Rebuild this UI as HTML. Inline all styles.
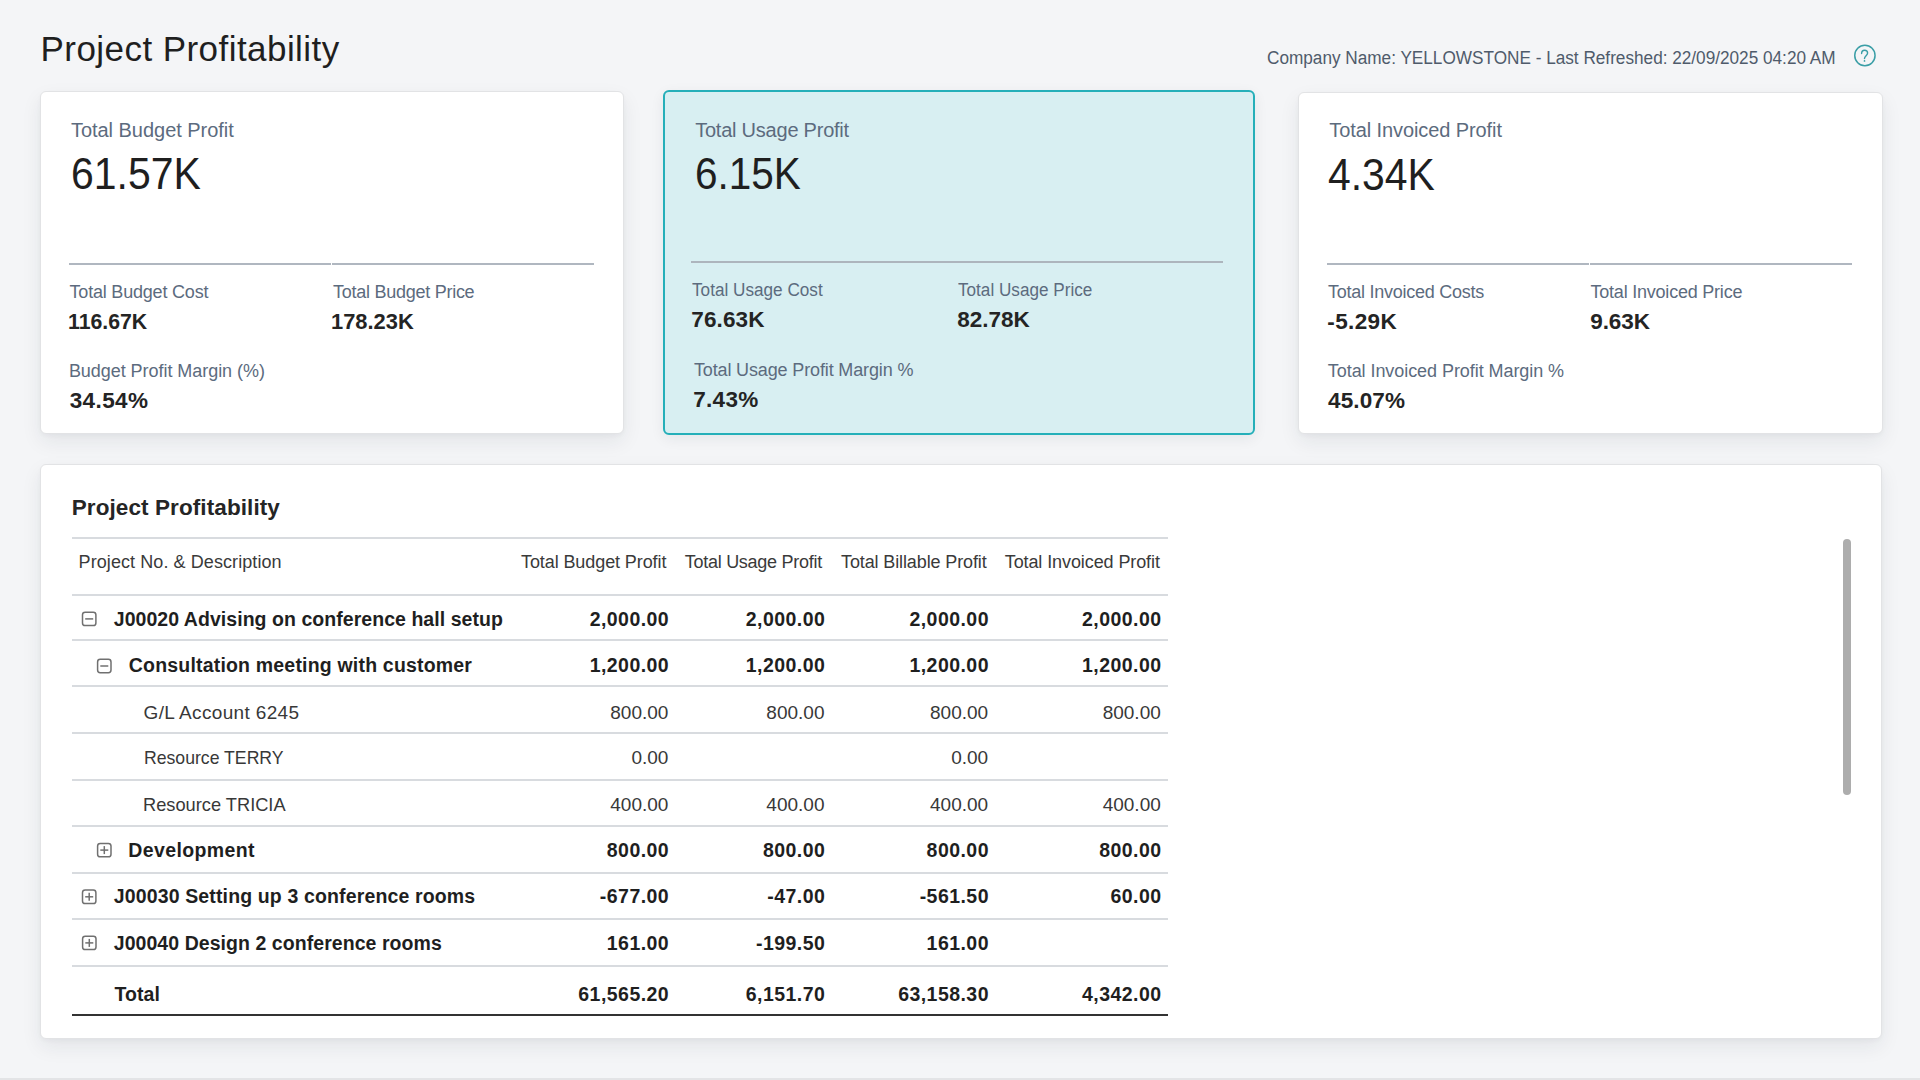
<!DOCTYPE html>
<html><head><meta charset="utf-8">
<style>
html,body{margin:0;padding:0;}
body{width:1920px;height:1080px;overflow:hidden;background:#f4f5f7;position:relative;font-family:"Liberation Sans",sans-serif;}
.t{position:absolute;white-space:nowrap;}
.card{position:absolute;box-sizing:border-box;background:#fff;border:1px solid #e2e3e5;border-radius:6px;box-shadow:0 8px 20px rgba(30,40,60,0.075),0 2px 4px rgba(30,40,60,0.03);}
.hl{position:absolute;height:2px;}
.icon{position:absolute;box-sizing:border-box;width:14.5px;height:14.5px;border:1.5px solid #7b7b7b;border-radius:3px;}
.icon:before{content:"";position:absolute;left:1.75px;right:1.75px;top:5.25px;height:1.5px;background:#7b7b7b;}
.icon.plus:after{content:"";position:absolute;top:1.75px;bottom:1.75px;left:5.25px;width:1.5px;background:#7b7b7b;}
</style></head><body>
<div class="card" style="left:40px;top:91px;width:584px;height:343px;"></div>
<div class="card" style="left:663px;top:90px;width:592px;height:345px;background:#d8eff2;border:2px solid #25afb9;box-shadow:0 4px 14px rgba(30,40,60,0.07);"></div>
<div class="card" style="left:1298px;top:92px;width:585px;height:342px;"></div>
<div class="card" style="left:40px;top:464px;width:1842px;height:575px;"></div>
<!-- card dividers -->
<div class="hl" style="left:69px;top:263px;width:262px;background:#b0b7c0"></div>
<div class="hl" style="left:332px;top:263px;width:262px;background:#b0b7c0"></div>
<div class="hl" style="left:691px;top:261px;width:532px;background:#adb5bd"></div>
<div class="hl" style="left:1327px;top:263px;width:262px;background:#b0b7c0"></div>
<div class="hl" style="left:1590px;top:263px;width:262px;background:#b0b7c0"></div>
<!-- table lines -->
<div class="hl" style="left:72px;top:537px;width:1096px;background:#d8dbdf"></div>
<div class="hl" style="left:72px;top:594px;width:1096px;background:#d8dbdf"></div>
<div class="hl" style="left:72px;top:639px;width:1096px;background:#d8dbdf"></div>
<div class="hl" style="left:72px;top:685px;width:1096px;background:#d8dbdf"></div>
<div class="hl" style="left:72px;top:732px;width:1096px;background:#d8dbdf"></div>
<div class="hl" style="left:72px;top:779px;width:1096px;background:#d8dbdf"></div>
<div class="hl" style="left:72px;top:825px;width:1096px;background:#d8dbdf"></div>
<div class="hl" style="left:72px;top:872px;width:1096px;background:#d8dbdf"></div>
<div class="hl" style="left:72px;top:918px;width:1096px;background:#d8dbdf"></div>
<div class="hl" style="left:72px;top:965px;width:1096px;background:#d8dbdf"></div>
<div class="hl" style="left:72px;top:1014px;width:1096px;background:#333"></div>
<!-- expand icons -->
<svg style="position:absolute;left:81px;top:611px" width="18" height="18"><rect x="1.50" y="1.20" width="13.4" height="13.4" rx="2.6" fill="none" stroke="#707070" stroke-width="1.5"/><path d="M4.20 7.90H12.20" stroke="#707070" stroke-width="1.5"/></svg>
<svg style="position:absolute;left:96px;top:658px" width="18" height="18"><rect x="1.60" y="1.30" width="13.4" height="13.4" rx="2.6" fill="none" stroke="#707070" stroke-width="1.5"/><path d="M4.30 8.00H12.30" stroke="#707070" stroke-width="1.5"/></svg>
<svg style="position:absolute;left:96px;top:842px" width="18" height="18"><rect x="1.60" y="1.40" width="13.4" height="13.4" rx="2.6" fill="none" stroke="#707070" stroke-width="1.5"/><path d="M4.30 8.10H12.30" stroke="#707070" stroke-width="1.5"/><path d="M8.30 4.10V12.10" stroke="#707070" stroke-width="1.5"/></svg>
<svg style="position:absolute;left:81px;top:889px" width="18" height="18"><rect x="1.50" y="1.10" width="13.4" height="13.4" rx="2.6" fill="none" stroke="#707070" stroke-width="1.5"/><path d="M4.20 7.80H12.20" stroke="#707070" stroke-width="1.5"/><path d="M8.20 3.80V11.80" stroke="#707070" stroke-width="1.5"/></svg>
<svg style="position:absolute;left:81px;top:935px" width="18" height="18"><rect x="1.60" y="1.20" width="13.4" height="13.4" rx="2.6" fill="none" stroke="#707070" stroke-width="1.5"/><path d="M4.30 7.90H12.30" stroke="#707070" stroke-width="1.5"/><path d="M8.30 3.90V11.90" stroke="#707070" stroke-width="1.5"/></svg>
<!-- scrollbar -->
<div style="position:absolute;left:1843px;top:539px;width:8px;height:256px;border-radius:4px;background:#adadad"></div>
<!-- help icon -->
<svg style="position:absolute;left:1853px;top:44px" width="24" height="24" viewBox="0 0 24 24">
<circle cx="11.9" cy="11.5" r="10.15" fill="none" stroke="#3a9ea6" stroke-width="1.5"/>
<path d="M8.6 9.5 C8.6 7.5 9.9 6.2 11.6 6.2 C13.3 6.2 14.6 7.4 14.6 9.1 C14.6 11.3 11.5 12.2 11.5 14.5" fill="none" stroke="#3a9ea6" stroke-width="1.4" stroke-linecap="round"/>
<circle cx="11.5" cy="16.9" r="0.85" fill="#3a9ea6"/>
</svg>
<div style="position:absolute;left:0;top:1078px;width:1920px;height:2px;background:#e3e4e6"></div>
<div class="t" style="left:40.57px;top:27.12px;font-size:35px;line-height:44px;font-weight:400;color:#1f1f1f;letter-spacing:0.440px;">Project Profitability</div>
<div class="t" style="left:1266.69px;top:46.51px;font-size:18px;line-height:22px;font-weight:400;color:#4f5b6b;letter-spacing:0.000px;transform:scaleX(0.9546);transform-origin:0 0;">Company Name: YELLOWSTONE - Last Refreshed: 22/09/2025 04:20 AM</div>
<div class="t" style="left:70.94px;top:117.77px;font-size:20px;line-height:25px;font-weight:400;color:#5c6b7e;letter-spacing:-0.030px;">Total Budget Profit</div>
<div class="t" style="left:70.73px;top:145.71px;font-size:45px;line-height:56px;font-weight:400;color:#1f1f1f;letter-spacing:0.000px;transform:scaleX(0.9102);transform-origin:0 0;">61.57K</div>
<div class="t" style="left:69.52px;top:281.26px;font-size:18px;line-height:22px;font-weight:400;color:#5c6b7e;letter-spacing:-0.198px;">Total Budget Cost</div>
<div class="t" style="left:68.47px;top:307.90px;font-size:22.5px;line-height:28px;font-weight:700;color:#242424;letter-spacing:0.000px;transform:scaleX(0.9448);transform-origin:0 0;">116.67K</div>
<div class="t" style="left:333.02px;top:281.26px;font-size:18px;line-height:22px;font-weight:400;color:#5c6b7e;letter-spacing:-0.263px;">Total Budget Price</div>
<div class="t" style="left:331.13px;top:307.90px;font-size:22.5px;line-height:28px;font-weight:700;color:#242424;letter-spacing:0.000px;transform:scaleX(0.9721);transform-origin:0 0;">178.23K</div>
<div class="t" style="left:68.89px;top:360.26px;font-size:18px;line-height:22px;font-weight:400;color:#5c6b7e;letter-spacing:-0.045px;">Budget Profit Margin (%)</div>
<div class="t" style="left:69.65px;top:387.20px;font-size:22.5px;line-height:28px;font-weight:700;color:#242424;letter-spacing:0.412px;">34.54%</div>
<div class="t" style="left:695.19px;top:117.57px;font-size:20px;line-height:25px;font-weight:400;color:#5c6b7e;letter-spacing:-0.230px;">Total Usage Profit</div>
<div class="t" style="left:695.00px;top:145.51px;font-size:45px;line-height:56px;font-weight:400;color:#1f1f1f;letter-spacing:0.000px;transform:scaleX(0.9000);transform-origin:0 0;">6.15K</div>
<div class="t" style="left:692.23px;top:279.36px;font-size:18px;line-height:22px;font-weight:400;color:#5c6b7e;letter-spacing:0.000px;transform:scaleX(0.9536);transform-origin:0 0;">Total Usage Cost</div>
<div class="t" style="left:691.30px;top:305.50px;font-size:22.5px;line-height:28px;font-weight:700;color:#242424;letter-spacing:0.125px;">76.63K</div>
<div class="t" style="left:957.63px;top:279.36px;font-size:18px;line-height:22px;font-weight:400;color:#5c6b7e;letter-spacing:0.000px;transform:scaleX(0.9521);transform-origin:0 0;">Total Usage Price</div>
<div class="t" style="left:957.30px;top:305.50px;font-size:22.5px;line-height:28px;font-weight:700;color:#242424;letter-spacing:-0.035px;">82.78K</div>
<div class="t" style="left:693.92px;top:359.16px;font-size:18px;line-height:22px;font-weight:400;color:#5c6b7e;letter-spacing:-0.138px;">Total Usage Profit Margin %</div>
<div class="t" style="left:693.30px;top:385.70px;font-size:22.5px;line-height:28px;font-weight:700;color:#242424;letter-spacing:0.281px;">7.43%</div>
<div class="t" style="left:1329.29px;top:118.47px;font-size:20px;line-height:25px;font-weight:400;color:#5c6b7e;letter-spacing:-0.094px;">Total Invoiced Profit</div>
<div class="t" style="left:1328.36px;top:146.71px;font-size:45px;line-height:56px;font-weight:400;color:#1f1f1f;letter-spacing:0.000px;transform:scaleX(0.9088);transform-origin:0 0;">4.34K</div>
<div class="t" style="left:1328.02px;top:280.86px;font-size:18px;line-height:22px;font-weight:400;color:#5c6b7e;letter-spacing:-0.252px;">Total Invoiced Costs</div>
<div class="t" style="left:1327.30px;top:307.90px;font-size:22.5px;line-height:28px;font-weight:700;color:#242424;letter-spacing:0.369px;">-5.29K</div>
<div class="t" style="left:1590.52px;top:280.86px;font-size:18px;line-height:22px;font-weight:400;color:#5c6b7e;letter-spacing:-0.219px;">Total Invoiced Price</div>
<div class="t" style="left:1590.30px;top:307.90px;font-size:22.5px;line-height:28px;font-weight:700;color:#242424;letter-spacing:-0.115px;">9.63K</div>
<div class="t" style="left:1327.82px;top:360.16px;font-size:18px;line-height:22px;font-weight:400;color:#5c6b7e;letter-spacing:-0.062px;">Total Invoiced Profit Margin %</div>
<div class="t" style="left:1328.00px;top:386.50px;font-size:22.5px;line-height:28px;font-weight:700;color:#242424;letter-spacing:0.142px;">45.07%</div>
<div class="t" style="left:71.69px;top:493.60px;font-size:22.5px;line-height:28px;font-weight:700;color:#252525;letter-spacing:0.094px;">Project Profitability</div>
<div class="t" style="left:78.59px;top:550.86px;font-size:18px;line-height:22px;font-weight:400;color:#3a3a3a;letter-spacing:0.081px;">Project No. &amp; Description</div>
<div class="t" style="left:520.97px;top:550.76px;font-size:18px;line-height:22px;font-weight:400;color:#3a3a3a;letter-spacing:-0.090px;">Total Budget Profit</div>
<div class="t" style="left:684.72px;top:550.76px;font-size:18px;line-height:22px;font-weight:400;color:#3a3a3a;letter-spacing:-0.267px;">Total Usage Profit</div>
<div class="t" style="left:841.02px;top:550.76px;font-size:18px;line-height:22px;font-weight:400;color:#3a3a3a;letter-spacing:-0.117px;">Total Billable Profit</div>
<div class="t" style="left:1004.72px;top:550.76px;font-size:18px;line-height:22px;font-weight:400;color:#3a3a3a;letter-spacing:-0.093px;">Total Invoiced Profit</div>
<div class="t" style="left:113.75px;top:606.84px;font-size:19.5px;line-height:24px;font-weight:700;color:#1f1f1f;letter-spacing:0.047px;">J00020 Advising on conference hall setup</div>
<div class="t" style="left:589.64px;top:606.84px;font-size:19.5px;line-height:24px;font-weight:700;color:#1f1f1f;letter-spacing:0.450px;">2,000.00</div>
<div class="t" style="left:745.74px;top:606.84px;font-size:19.5px;line-height:24px;font-weight:700;color:#1f1f1f;letter-spacing:0.450px;">2,000.00</div>
<div class="t" style="left:909.44px;top:606.84px;font-size:19.5px;line-height:24px;font-weight:700;color:#1f1f1f;letter-spacing:0.450px;">2,000.00</div>
<div class="t" style="left:1082.04px;top:606.84px;font-size:19.5px;line-height:24px;font-weight:700;color:#1f1f1f;letter-spacing:0.450px;">2,000.00</div>
<div class="t" style="left:128.79px;top:653.14px;font-size:19.5px;line-height:24px;font-weight:700;color:#1f1f1f;letter-spacing:0.189px;">Consultation meeting with customer</div>
<div class="t" style="left:589.64px;top:653.14px;font-size:19.5px;line-height:24px;font-weight:700;color:#1f1f1f;letter-spacing:0.450px;">1,200.00</div>
<div class="t" style="left:745.74px;top:653.14px;font-size:19.5px;line-height:24px;font-weight:700;color:#1f1f1f;letter-spacing:0.450px;">1,200.00</div>
<div class="t" style="left:909.44px;top:653.14px;font-size:19.5px;line-height:24px;font-weight:700;color:#1f1f1f;letter-spacing:0.450px;">1,200.00</div>
<div class="t" style="left:1082.04px;top:653.14px;font-size:19.5px;line-height:24px;font-weight:700;color:#1f1f1f;letter-spacing:0.450px;">1,200.00</div>
<div class="t" style="left:143.61px;top:700.62px;font-size:19px;line-height:24px;font-weight:400;color:#383838;letter-spacing:0.337px;">G/L Account 6245</div>
<div class="t" style="left:610.26px;top:700.62px;font-size:19px;line-height:24px;font-weight:400;color:#383838;letter-spacing:0.000px;">800.00</div>
<div class="t" style="left:766.36px;top:700.62px;font-size:19px;line-height:24px;font-weight:400;color:#383838;letter-spacing:0.000px;">800.00</div>
<div class="t" style="left:930.06px;top:700.62px;font-size:19px;line-height:24px;font-weight:400;color:#383838;letter-spacing:0.000px;">800.00</div>
<div class="t" style="left:1102.66px;top:700.62px;font-size:19px;line-height:24px;font-weight:400;color:#383838;letter-spacing:0.000px;">800.00</div>
<div class="t" style="left:143.52px;top:746.32px;font-size:19px;line-height:24px;font-weight:400;color:#383838;letter-spacing:0.000px;transform:scaleX(0.9285);transform-origin:0 0;">Resource TERRY</div>
<div class="t" style="left:631.39px;top:746.32px;font-size:19px;line-height:24px;font-weight:400;color:#383838;letter-spacing:0.000px;">0.00</div>
<div class="t" style="left:951.19px;top:746.32px;font-size:19px;line-height:24px;font-weight:400;color:#383838;letter-spacing:0.000px;">0.00</div>
<div class="t" style="left:143.47px;top:793.32px;font-size:19px;line-height:24px;font-weight:400;color:#383838;letter-spacing:0.000px;transform:scaleX(0.9601);transform-origin:0 0;">Resource TRICIA</div>
<div class="t" style="left:610.26px;top:793.32px;font-size:19px;line-height:24px;font-weight:400;color:#383838;letter-spacing:0.000px;">400.00</div>
<div class="t" style="left:766.36px;top:793.32px;font-size:19px;line-height:24px;font-weight:400;color:#383838;letter-spacing:0.000px;">400.00</div>
<div class="t" style="left:930.06px;top:793.32px;font-size:19px;line-height:24px;font-weight:400;color:#383838;letter-spacing:0.000px;">400.00</div>
<div class="t" style="left:1102.66px;top:793.32px;font-size:19px;line-height:24px;font-weight:400;color:#383838;letter-spacing:0.000px;">400.00</div>
<div class="t" style="left:128.28px;top:837.94px;font-size:19.5px;line-height:24px;font-weight:700;color:#1f1f1f;letter-spacing:0.377px;">Development</div>
<div class="t" style="left:606.80px;top:837.94px;font-size:19.5px;line-height:24px;font-weight:700;color:#1f1f1f;letter-spacing:0.450px;">800.00</div>
<div class="t" style="left:762.90px;top:837.94px;font-size:19.5px;line-height:24px;font-weight:700;color:#1f1f1f;letter-spacing:0.450px;">800.00</div>
<div class="t" style="left:926.60px;top:837.94px;font-size:19.5px;line-height:24px;font-weight:700;color:#1f1f1f;letter-spacing:0.450px;">800.00</div>
<div class="t" style="left:1099.20px;top:837.94px;font-size:19.5px;line-height:24px;font-weight:700;color:#1f1f1f;letter-spacing:0.450px;">800.00</div>
<div class="t" style="left:113.75px;top:883.99px;font-size:19.5px;line-height:24px;font-weight:700;color:#1f1f1f;letter-spacing:0.137px;">J00030 Setting up 3 conference rooms</div>
<div class="t" style="left:599.85px;top:883.99px;font-size:19.5px;line-height:24px;font-weight:700;color:#1f1f1f;letter-spacing:0.450px;">-677.00</div>
<div class="t" style="left:767.25px;top:883.99px;font-size:19.5px;line-height:24px;font-weight:700;color:#1f1f1f;letter-spacing:0.450px;">-47.00</div>
<div class="t" style="left:919.65px;top:883.99px;font-size:19.5px;line-height:24px;font-weight:700;color:#1f1f1f;letter-spacing:0.450px;">-561.50</div>
<div class="t" style="left:1110.49px;top:883.99px;font-size:19.5px;line-height:24px;font-weight:700;color:#1f1f1f;letter-spacing:0.450px;">60.00</div>
<div class="t" style="left:113.75px;top:930.64px;font-size:19.5px;line-height:24px;font-weight:700;color:#1f1f1f;letter-spacing:0.058px;">J00040 Design 2 conference rooms</div>
<div class="t" style="left:606.80px;top:930.64px;font-size:19.5px;line-height:24px;font-weight:700;color:#1f1f1f;letter-spacing:0.450px;">161.00</div>
<div class="t" style="left:755.95px;top:930.64px;font-size:19.5px;line-height:24px;font-weight:700;color:#1f1f1f;letter-spacing:0.450px;">-199.50</div>
<div class="t" style="left:926.60px;top:930.64px;font-size:19.5px;line-height:24px;font-weight:700;color:#1f1f1f;letter-spacing:0.450px;">161.00</div>
<div class="t" style="left:114.40px;top:981.84px;font-size:19.5px;line-height:24px;font-weight:700;color:#1f1f1f;letter-spacing:0.093px;">Total</div>
<div class="t" style="left:578.34px;top:981.84px;font-size:19.5px;line-height:24px;font-weight:700;color:#1f1f1f;letter-spacing:0.450px;">61,565.20</div>
<div class="t" style="left:745.74px;top:981.84px;font-size:19.5px;line-height:24px;font-weight:700;color:#1f1f1f;letter-spacing:0.450px;">6,151.70</div>
<div class="t" style="left:898.14px;top:981.84px;font-size:19.5px;line-height:24px;font-weight:700;color:#1f1f1f;letter-spacing:0.450px;">63,158.30</div>
<div class="t" style="left:1082.04px;top:981.84px;font-size:19.5px;line-height:24px;font-weight:700;color:#1f1f1f;letter-spacing:0.450px;">4,342.00</div>
</body></html>
